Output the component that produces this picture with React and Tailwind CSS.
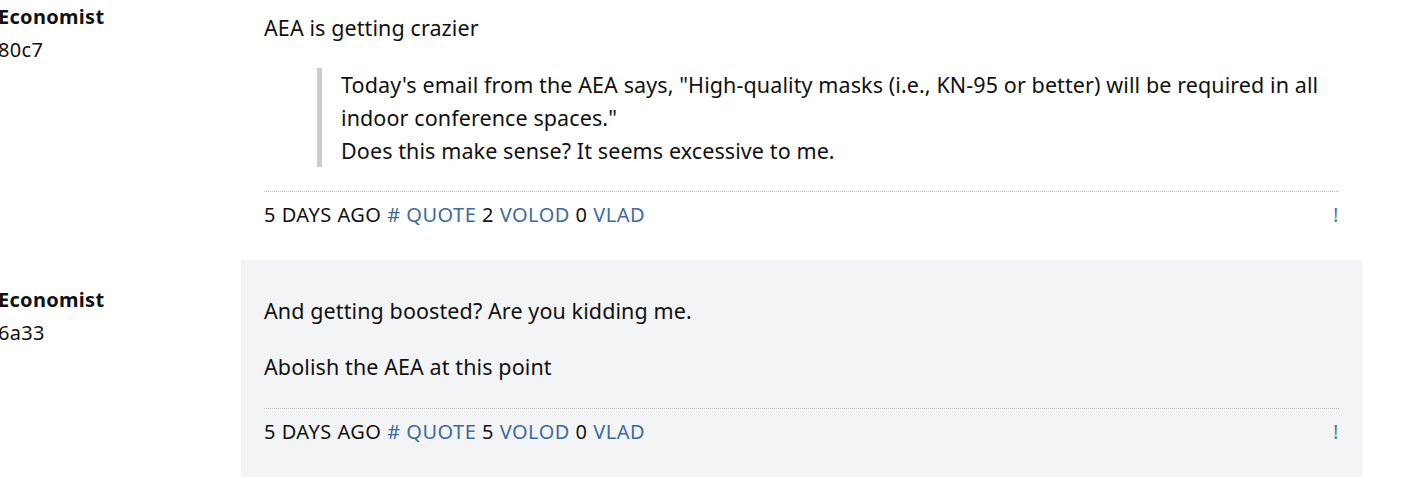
const posts = [
  {
    id: "80c7",
    votes: 2,
    bg: "",
    divider: "mt-[24px]",
    body: (
      <>
        <p className="leading-[33px]">AEA is getting crazier</p>
        <blockquote className="mt-[24px] ml-[53px] border-l-[5px] border-[#cccccc] pl-[19px] leading-[33px]">
          Today's email from the AEA says, "High-quality masks (i.e., KN-95 or better) will be required in all indoor
          conference spaces."
          <br />
          Does this make sense? It seems excessive to me.
        </blockquote>
      </>
    ),
  },
  {
    id: "6a33",
    votes: 5,
    bg: "bg-[#f3f4f6]",
    divider: "mt-[25px]",
    body: (
      <>
        <p className="leading-[33px]">And getting boosted? Are you kidding me.</p>
        <p className="mt-[23px] leading-[33px]">Abolish the AEA at this point</p>
      </>
    ),
  },
];

function Post({ post }) {
  return (
    <div className="flex">
      <div className="w-[243px] shrink-0 pt-[23px] text-[20px] leading-[33px] tracking-[0.3px]">
        <div className="font-bold">Economist</div>
        <div>{post.id}</div>
      </div>
      <div
        className={`w-[1121px] shrink-0 px-[23px] pt-[34px] pb-[30px] text-[21.5px] tracking-[0.1px] ${post.bg}`}
      >
        {post.body}
        <div
          className={`${post.divider} border-t border-dotted border-[#bbbbbb] pt-[8px] flex justify-between text-[20px] leading-[30px] tracking-[0.5px] uppercase`}
        >
          <div>
            5 days ago <span className="text-[#3d6b9e]">#</span>{" "}
            <span className="text-[#3d6b9e]">Quote</span> {post.votes}{" "}
            <span className="text-[#3d6b9e]">Volod</span> 0 <span className="text-[#3d6b9e]">Vlad</span>
          </div>
          <span className="text-[#3a7dc0]">!</span>
        </div>
      </div>
    </div>
  );
}

export default function App() {
  return (
    <div className="min-h-screen bg-white text-[#111111]" style={{ fontFamily: '"Noto Sans", sans-serif' }}>
      <div className="-mt-[23px] -ml-[2px] flex flex-col">
        {posts.map((p) => (
          <Post key={p.id} post={p} />
        ))}
      </div>
    </div>
  );
}
